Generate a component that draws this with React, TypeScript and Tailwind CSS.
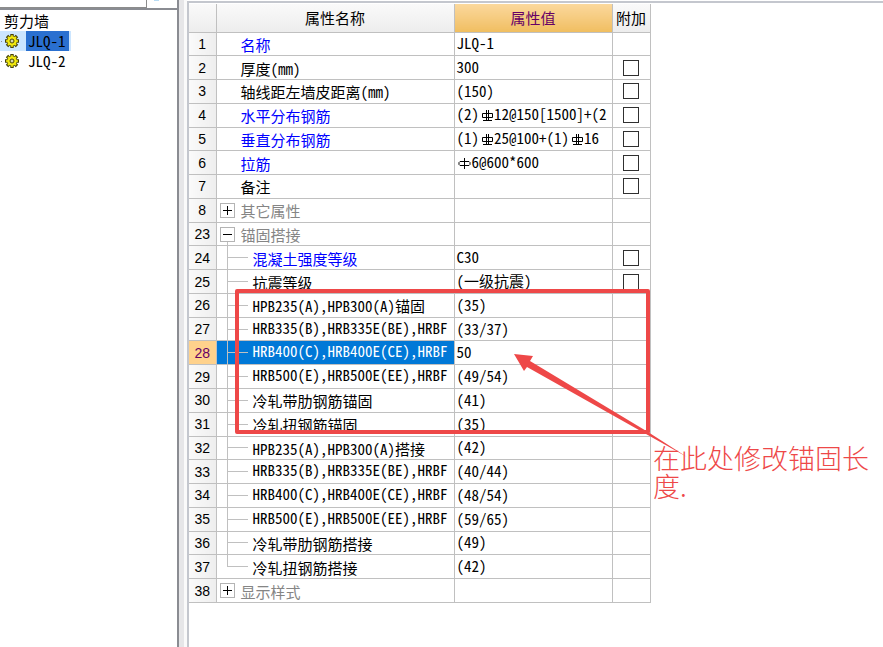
import React, { useState } from "react";

type Row = {
    no: number;
    name: string;
    value?: string;
    kind?: "plain" | "group" | "child" | "last";
    open?: boolean;
    blue?: boolean;
    check?: boolean;
};

const ROWS: Row[] = [
    { no: 1, name: "名称", value: "JLQ-1", blue: true },
    { no: 2, name: "厚度(mm)", value: "300", check: true },
    { no: 3, name: "轴线距左墙皮距离(mm)", value: "(150)", check: true },
    { no: 4, name: "水平分布钢筋", value: "(2)#12@150[1500]+(2", blue: true, check: true },
    { no: 5, name: "垂直分布钢筋", value: "(1)#25@100+(1)#16", blue: true, check: true },
    { no: 6, name: "拉筋", value: "$6@600*600", blue: true, check: true },
    { no: 7, name: "备注", check: true },
    { no: 8, name: "其它属性", kind: "group" },
    { no: 23, name: "锚固搭接", kind: "group", open: true },
    { no: 24, name: "混凝土强度等级", value: "C30", kind: "child", blue: true, check: true },
    { no: 25, name: "抗震等级", value: "(一级抗震)", kind: "child", check: true },
    { no: 26, name: "HPB235(A),HPB300(A)锚固", value: "(35)", kind: "child" },
    { no: 27, name: "HRB335(B),HRB335E(BE),HRBF", value: "(33/37)", kind: "child" },
    { no: 28, name: "HRB400(C),HRB400E(CE),HRBF", value: "50", kind: "child" },
    { no: 29, name: "HRB500(E),HRB500E(EE),HRBF", value: "(49/54)", kind: "child" },
    { no: 30, name: "冷轧带肋钢筋锚固", value: "(41)", kind: "child" },
    { no: 31, name: "冷轧扭钢筋锚固", value: "(35)", kind: "child" },
    { no: 32, name: "HPB235(A),HPB300(A)搭接", value: "(42)", kind: "child" },
    { no: 33, name: "HRB335(B),HRB335E(BE),HRBF", value: "(40/44)", kind: "child" },
    { no: 34, name: "HRB400(C),HRB400E(CE),HRBF", value: "(48/54)", kind: "child" },
    { no: 35, name: "HRB500(E),HRB500E(EE),HRBF", value: "(59/65)", kind: "child" },
    { no: 36, name: "冷轧带肋钢筋搭接", value: "(49)", kind: "child" },
    { no: 37, name: "冷轧扭钢筋搭接", value: "(42)", kind: "last" },
    { no: 38, name: "显示样式", kind: "group" },
];

const WALLS = ["JLQ-1", "JLQ-2"];

function GearIcon() {
    return (
        <svg className="h-[14px] w-[14px] shrink-0" viewBox="0 0 14 14">
            <g stroke="#45420a" strokeWidth="3.4">
                <path d="M7 0v14M0 7h14M2 2l10 10M12 2L2 12" />
            </g>
            <circle cx="7" cy="7" r="5" fill="#f2ea10" stroke="#5a560a" strokeWidth="0.6" />
            <path d="M7 1v3M7 10v3M1 7h3M10 7h3M2.8 2.8l2 2M9.2 9.2l2 2M11.2 2.8l-2 2M4.8 9.2l-2 2" stroke="#f2ea10" strokeWidth="1.4" />
            <circle cx="7" cy="7" r="2" fill="#d8d8b0" stroke="#4a4600" strokeWidth="1" />
        </svg>
    );
}

// 钢筋级别符号
function RebarIcon({ grade }: { grade: "#" | "$" }) {
    return (
        <svg className="inline-block h-[15px] w-[15px] align-[-3px]" viewBox="0 0 15 15" fill="none" stroke="currentColor">
            {grade === "#" ? (
                <path d="M3.5 5.5h10v4h-10zM7.5 2v11M9.5 2v11M4 12.5h9" />
            ) : (
                <path d="M3 5.5h9l1 1v2l-1 1H3l-1-1v-2zM7.5 2v11" />
            )}
        </svg>
    );
}

function ValueText({ value }: { value: string }) {
    return (
        <>
            {value.split(/([#$])/).map((part, i) =>
                part === "#" || part === "$" ? <RebarIcon key={i} grade={part} /> : part
            )}
        </>
    );
}

function NameCell({ row, active }: { row: Row; active: boolean }) {
    const kind = row.kind ?? "plain";
    const color = active ? "text-white" : kind === "group" ? "text-[#858585]" : row.blue ? "text-[#0000ff]" : "text-black";

    return (
        <div className={"flex h-full items-center overflow-hidden " + color}>
            {kind === "plain" && <span className="w-6 shrink-0" />}
            {kind === "group" && (
                <span className="flex h-full w-6 shrink-0 flex-col items-start pl-[3px]">
                    <span className="flex-1" />
                    <button
                        type="button"
                        aria-label={row.name}
                        className="flex h-[15px] w-[15px] items-center justify-center border border-[#b4b4b4] bg-white text-black"
                    >
                        <svg className="h-[9px] w-[9px]" viewBox="0 0 9 9" stroke="currentColor">
                            <path d={row.open ? "M0 4.5h9" : "M0 4.5h9M4.5 0v9"} />
                        </svg>
                    </button>
                    <span className={row.open ? "ml-[7px] flex-1 border-l border-[#c0c0c0]" : "flex-1"} />
                </span>
            )}
            {(kind === "child" || kind === "last") && (
                <span className="flex h-full w-9 shrink-0 flex-col pr-[5px] pl-[10px]">
                    <span className="flex-1 border-b border-l border-[#c0c0c0]" />
                    <span className={kind === "child" ? "flex-1 border-l border-[#c0c0c0]" : "flex-1"} />
                </span>
            )}
            <span className={/^H.*F$/.test(row.name) ? "pb-[3px]" : "pt-[2px]"}>{row.name}</span>
        </div>
    );
}

export default function App() {
    const [wall, setWall] = useState("JLQ-1");
    const [selected, setSelected] = useState(28);

    return (
        <main className="flex min-h-screen overflow-hidden bg-white font-['Noto_Sans_Mono_CJK_SC','Liberation_Mono','Noto_Sans_CJK_SC',monospace] text-[15px] leading-5 text-black">
            {/* 构件列表 */}
            <aside className="flex w-[179px] shrink-0 flex-col border-r-2 border-[#8a8c92]">
                <div className="flex h-[8px] items-start">
                    <input aria-label="搜索构件" className="h-full w-[147px] border-r border-b border-[#8c8c8c] bg-white outline-none" />
                    <span className="ml-[7px] h-px w-[5px] bg-[#b8dcf4]" />
                </div>
                <div className="flex-1 border-t-2 border-[#8a8c92]">
                    <h2 className="h-[21px] pl-1 leading-[22px]">剪力墙</h2>
                    <ul>
                        {WALLS.map((name) => (
                            <li key={name}>
                                <button
                                    type="button"
                                    onClick={() => setWall(name)}
                                    className={"flex h-5 w-[71px] items-center " + (name === wall ? "bg-[#cce6ff]" : "")}
                                >
                                    <span className="mr-[3px] ml-px h-px w-px bg-[#909090]" />
                                    <GearIcon />
                                    <span className={"ml-[7px] h-5 w-[43px] pl-[2px] text-left " + (name === wall ? "bg-[#2a70d0]" : "")}>
                                        {name}
                                    </span>
                                </button>
                            </li>
                        ))}
                    </ul>
                </div>
            </aside>

            <div className="w-2 shrink-0 border-r-3 border-[#fafafa] bg-[#e6e6e8]" />

            {/* 属性编辑器 */}
            <section className="relative mt-px flex-1 border-t-2 border-l-2 border-[#c4c7ce] pt-px">
                <table className="h-[599px] w-[461px] table-fixed border-collapse leading-4">
                    <colgroup>
                        <col className="w-[27px]" />
                        <col className="w-[238px]" />
                        <col className="w-[158px]" />
                        <col className="w-[38px]" />
                    </colgroup>
                    <thead>
                        <tr className="h-[28px] bg-linear-to-b from-[#fafafa] to-[#ededed]">
                            <th className="border-r border-b border-[#c0c0c0] p-0" />
                            <th className="border-r border-b border-[#c0c0c0] p-0 font-normal">属性名称</th>
                            <th className="border-r border-b border-[#c0c0c0] bg-linear-to-b from-[#fbd89c] to-[#f0be60] p-0 font-normal text-[#660066]">
                                属性值
                            </th>
                            <th className="border-r border-b border-[#c0c0c0] p-0 font-normal">附加</th>
                        </tr>
                    </thead>
                    <tbody>
                        {ROWS.map((row) => {
                            const active = row.no === selected;
                            return (
                                <tr key={row.no} className="h-[23px]" onClick={() => setSelected(row.no)}>
                                    <th
                                        scope="row"
                                        className={
                                            "border-r border-b border-[#c0c0c0] p-0 font-['Liberation_Sans',sans-serif] text-[14px] font-normal " +
                                            (active ? "bg-[#ffd28c] text-[#660066]" : "bg-linear-to-r from-[#fafafa] to-[#eeeeee]")
                                        }
                                    >
                                        {row.no}
                                    </th>
                                    <td className={"h-[23px] border-r border-b border-[#c0c0c0] p-0 whitespace-nowrap " + (active ? "bg-[#0078d7]" : "")}>
                                        <NameCell row={row} active={active} />
                                    </td>
                                    <td className="overflow-hidden border-r border-b border-[#c0c0c0] p-0 pb-px pl-[2px] whitespace-nowrap">
                                        <ValueText value={row.value ?? ""} />
                                    </td>
                                    <td className="border-r border-b border-[#c0c0c0] p-0">
                                        {row.check && (
                                            <input
                                                type="checkbox"
                                                aria-label={"附加 " + row.name}
                                                className="mx-auto block h-4 w-4 appearance-none border border-[#303030] bg-white checked:bg-[#0078d7]"
                                            />
                                        )}
                                    </td>
                                </tr>
                            );
                        })}
                    </tbody>
                </table>

                {/* 标注 */}
                <div className="pointer-events-none absolute top-[286px] left-[46px] h-[145px] w-[415px] rounded-xs border-4 border-[#ee4848]" />
                <svg className="pointer-events-none absolute top-[350px] left-[324px] h-[106px] w-[176px]" viewBox="0 0 176 106" fill="#ee4848">
                    <path d="M1 1l19 2-3 5 118 71 39 25-41-23L14 14l-3 4z" />
                </svg>
                <p className="absolute top-[441px] left-[464px] w-[220px] font-['Noto_Sans_CJK_SC',sans-serif] text-[27px] leading-7 font-light text-[#ee4848]">
                    在此处修改锚固长度.
                </p>
            </section>
        </main>
    );
}
